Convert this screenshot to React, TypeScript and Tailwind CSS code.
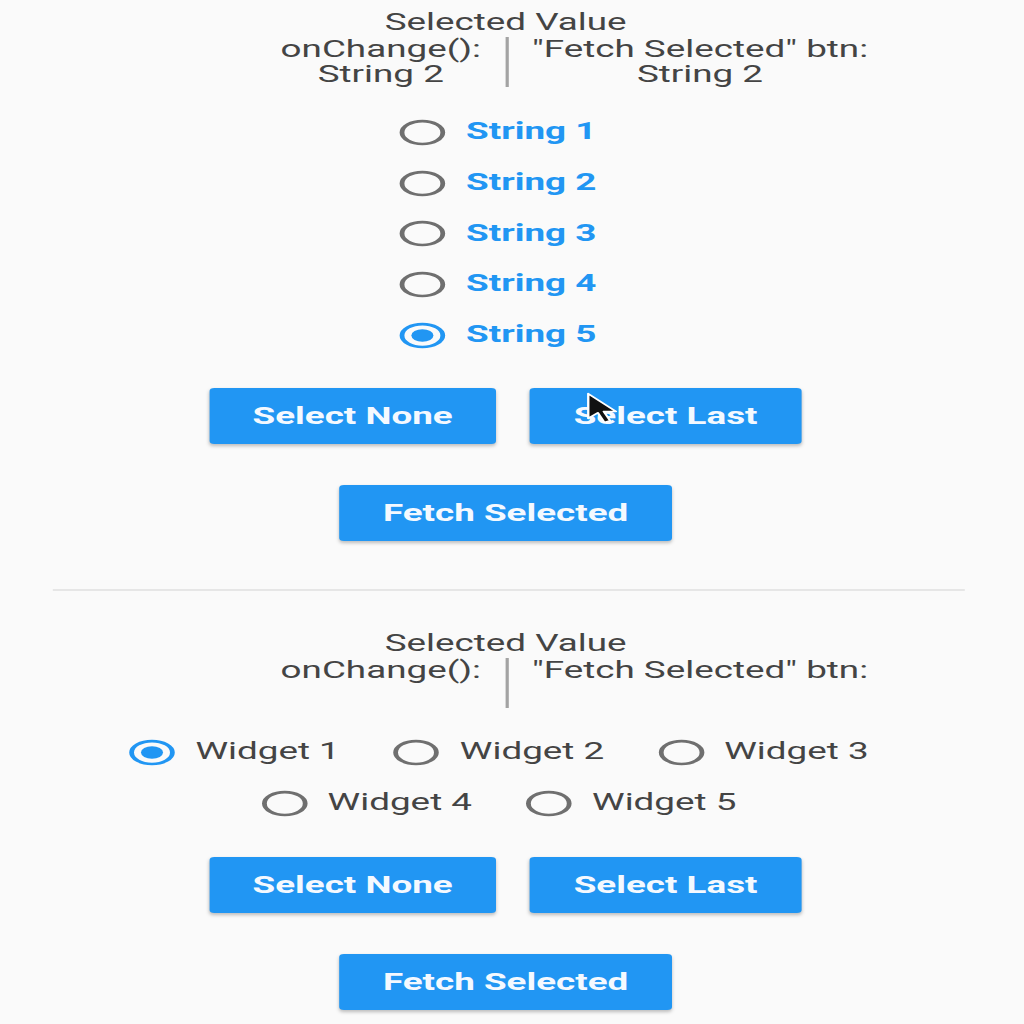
import { useState } from 'react';

const strings = ['String 1', 'String 2', 'String 3', 'String 4', 'String 5'];
const widgets = ['Widget 1', 'Widget 2', 'Widget 3', 'Widget 4', 'Widget 5'];

function RadioDot({ checked }: { checked: boolean }) {
    return (
        <svg width="30" height="27" viewBox="0 0 20 20" preserveAspectRatio="none" className="shrink-0">
            <circle cx="10" cy="10" r="8.5" fill="none" stroke={checked ? '#2196F3' : '#6f6f6f'} strokeWidth="2" />
            {checked && <circle cx="10" cy="10" r="4.6" fill="#2196F3" />}
        </svg>
    );
}

function SelectedHeader({ changed, fetched }: { changed: string; fetched: string }) {
    return (
        <div className="text-[23px] text-[#444]">
            <div className="text-center leading-[26px]">Selected Value</div>
            <div className="flex mt-[1px] ml-[160px]">
                <div className="w-[156px] text-center leading-[25px]">
                    <div>onChange():</div>
                    <div className="h-[25px]">{changed}</div>
                </div>
                <div className="w-[2px] bg-[#a3a3a3]" />
                <div className="w-[239px] text-center leading-[25px]">
                    <div>"Fetch Selected" btn:</div>
                    <div className="h-[25px]">{fetched}</div>
                </div>
            </div>
        </div>
    );
}

function Buttons({ cursor }: { cursor?: boolean }) {
    return (
        <div className="flex flex-col items-center text-[23px] font-bold text-[#f4f9ff]">
            <div className="flex gap-[20.6px]">
                <button className="w-[179.4px] h-[56px] pt-[3px] rounded-[3px] bg-[#2196F3] shadow-[0_2px_3px_rgba(0,0,0,0.25)]">
                    Select None
                </button>
                <button className="relative w-[170.6px] h-[56px] pt-[3px] rounded-[3px] bg-[#2196F3] shadow-[0_2px_3px_rgba(0,0,0,0.25)]">
                    Select Last
                    {cursor && (
                        <svg width="20" height="33" viewBox="0 0 12 20" preserveAspectRatio="none" className="absolute left-[35px] top-[4px]">
                            <path d="M1 1 L1 16 L4.6 12.6 L7 18.4 L9.2 17.4 L6.8 11.8 L11.4 11.8 Z" fill="#111" stroke="#fff" strokeWidth="0.9" strokeLinejoin="round" />
                        </svg>
                    )}
                </button>
            </div>
            <button className="mt-[41px] w-[208px] h-[56px] pt-[3px] rounded-[3px] bg-[#2196F3] shadow-[0_2px_3px_rgba(0,0,0,0.25)]">
                Fetch Selected
            </button>
        </div>
    );
}

export default function App() {
    const [picked, setPicked] = useState('String 5');
    const [widget, setWidget] = useState('Widget 1');

    return (
        <div className="min-h-screen bg-[#fafafa] overflow-hidden" style={{ fontFamily: 'Roboto, "Noto Sans", sans-serif' }}>
            <div className="w-[632px] origin-left scale-x-[1.6] pt-[10px] pb-[12px]">
                <SelectedHeader changed="String 2" fetched="String 2" />

                <div className="mt-[20px] flex flex-col items-center pr-[10px]">
                    {strings.map((s) => (
                        <div key={s} className="h-[50.75px] flex items-center gap-[12px] cursor-pointer" onClick={() => setPicked(s)}>
                            <RadioDot checked={picked === s} />
                            <span className="text-[23px] font-bold text-[#2196F3]">{s}</span>
                        </div>
                    ))}
                </div>

                <div className="mt-[27px]">
                    <Buttons cursor />
                </div>

                <div className="mt-[48px] ml-[32.5px] w-[570.5px] h-[2px] bg-[#e6e6e6]" />

                <div className="mt-[40px]">
                    <SelectedHeader changed="" fetched="" />
                </div>

                <div className="mt-[19px] mx-auto w-[540px] flex flex-wrap justify-center gap-x-[33px] pr-[9px]">
                    {widgets.map((w) => (
                        <div key={w} className="h-[51px] flex items-center gap-[12px] cursor-pointer" onClick={() => setWidget(w)}>
                            <RadioDot checked={widget === w} />
                            <span className="text-[23px] text-[#444]">{w}</span>
                        </div>
                    ))}
                </div>

                <div className="mt-[28px]">
                    <Buttons />
                </div>
            </div>
        </div>
    );
}
